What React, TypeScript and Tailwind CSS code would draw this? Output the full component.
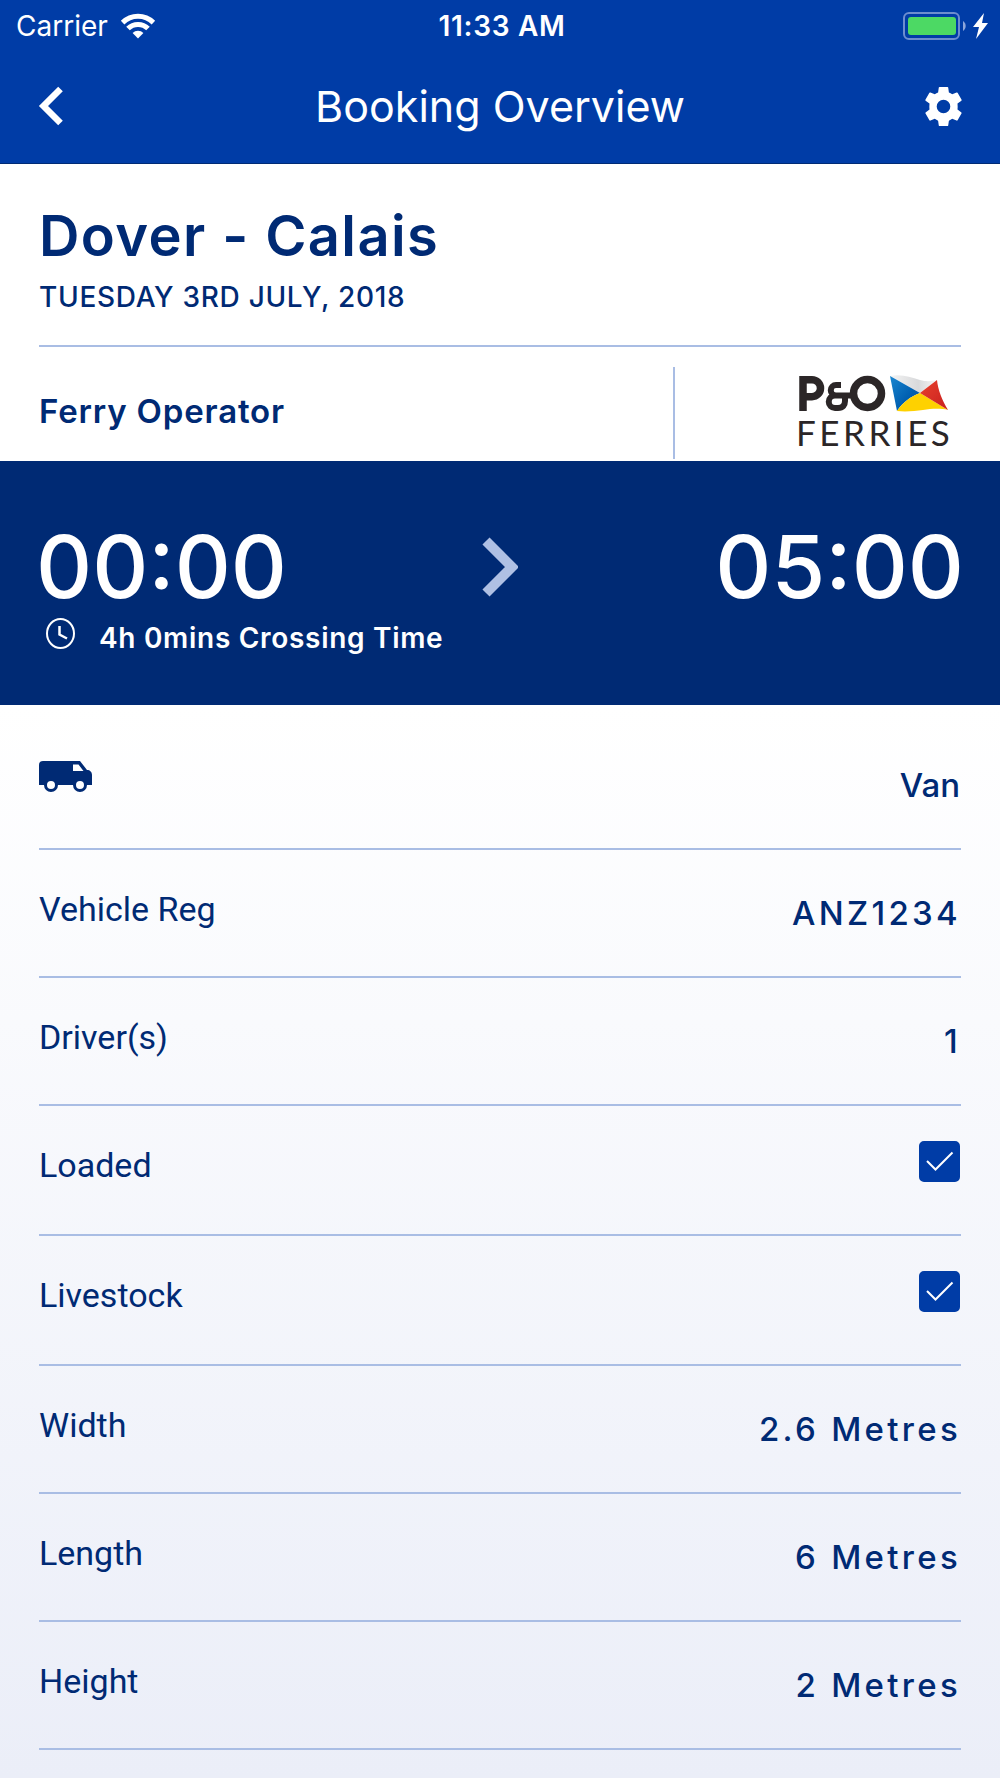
import React from "react";

const rows = [
  { label: "Vehicle Reg", value: "ANZ1234" },
  { label: "Driver(s)", value: "1" },
  { label: "Loaded", checked: true },
  { label: "Livestock", checked: true },
  { label: "Width", value: "2.6 Metres" },
  { label: "Length", value: "6 Metres" },
  { label: "Height", value: "2 Metres" },
];

const StatusBar = () => (
  <div className="grid grid-cols-3 items-center h-[51px] pl-4 pr-3 text-[28px] leading-8">
    <div className="flex items-center gap-3">
      <span>Carrier</span>
      <svg width="36" height="26" viewBox="0 0 36 26" aria-hidden="true">
        <g fill="none" stroke="white" strokeWidth="5">
          <path d="M2.6 9.6a22 22 0 0 1 30.8 0" />
          <path d="M8 15.6a14 14 0 0 1 20 0" />
        </g>
        <path fill="white" d="M12.6 20a7.6 7.6 0 0 1 10.8 0L18 25.6z" />
      </svg>
    </div>
    <span className="text-center font-semibold tracking-wide">11:33 AM</span>
    <div className="flex justify-end">
      <svg width="85" height="28" viewBox="0 0 85 28" aria-hidden="true">
        <rect x="1" y="1" width="55" height="26" rx="5" fill="none" stroke="#6c8dcf" strokeWidth="2" />
        <rect x="5" y="5" width="48" height="18" rx="3" fill="#4cd964" />
        <path d="M60 9a6 6 0 0 1 0 10z" fill="#8ca6db" />
        <path d="M81 1L70 15h6l-3 12L85 11h-6z" fill="white" />
      </svg>
    </div>
  </div>
);

const FerryLogo = () => (
  <svg
    role="img"
    aria-label="P&O Ferries"
    width="161"
    height="78"
    viewBox="-3 0 161 78"
    fill="none"
    stroke="#2b2627"
  >
    <defs>
      <linearGradient id="flagBlue" x1="0" y1="0" x2="1" y2="1">
        <stop offset="0" stopColor="#1a86d0" />
        <stop offset="0.6" stopColor="#005fb0" />
        <stop offset="1" stopColor="#0a4f9b" />
      </linearGradient>
      <linearGradient id="flagRed" x1="0" y1="0" x2="1" y2="1">
        <stop offset="0" stopColor="#e8402c" />
        <stop offset="1" stopColor="#c8201f" />
      </linearGradient>
      <linearGradient id="flagWhite" x1="0" y1="0" x2="1" y2="0">
        <stop offset="0" stopColor="#f4f4f4" />
        <stop offset="0.6" stopColor="#d8d9db" />
        <stop offset="1" stopColor="#f6f6f6" />
      </linearGradient>
    </defs>
    <g strokeWidth="7.500">
      <path d="M4 36V4.700h9a8.500 8.500 0 0 1 0 17H4" />
      <circle cx="68.500" cy="18.500" r="14" />
    </g>
    <path
      strokeWidth="6"
      d="M42 10h-5a5 5 0 0 0 0 10.500h-1a6 6 0 0 0 0 12.500h3c5 0 7-3 7-7v-7M36 20.500H54"
    />
    <g stroke="none">
      <path fill="url(#flagWhite)" d="M91 1c12-2 20 1 30 4 7 2 12 1 17 0L121 18z" />
      <path fill="url(#flagBlue)" d="M91 1l30 17c-10 4-17 9-23 18z" />
      <path fill="#fed100" d="M98 36c6-9 13-14 23-18l28 17c-9-2-17-1-25 0s-17 2-26 1z" />
      <path fill="url(#flagRed)" d="M138 5c1 10 5 20 11 30L121 18z" />
    </g>
    <text
      x="-3"
      y="71"
      fill="#2b2627"
      stroke="none"
      className="font-['Lato',sans-serif] text-[35px] tracking-widest"
    >
      FERRIES
    </text>
  </svg>
);

const VanIcon = () => (
  <svg role="img" aria-label="Vehicle" width="53" height="32" viewBox="0 0 53 32">
    <path
      fill="#002a74"
      fillRule="evenodd"
      d="M4 0h37l7 9c3 0 5 2 5 5v10h-5a7 7 0 0 1-14 0H19a7 7 0 0 1-14 0H0V4a4 4 0 0 1 4-4zM34 3.500V10h10.500l-5-6.500zM12 20a4 4 0 1 0 0 8 4 4 0 0 0 0-8zM41 20a4 4 0 1 0 0 8 4 4 0 0 0 0-8z"
    />
  </svg>
);

const GearIcon = () => (
  <svg width="37" height="39" viewBox="0 0 37 39" aria-hidden="true">
    <path
      fill="white"
      fillRule="evenodd"
      d="M14.500 0h8q.6 0 .7.600l.7 4.800q1.700.7 3.300 1.900l4.400-1.800q.6-.2 1 .3l4 7q.2.500-.2.900L32.500 16.500q.3 3 0 6l3.900 2.900q.4.300.2.900l-4 7q-.4.500-1 .3l-4.400-1.800q-1.600 1.200-3.300 1.900l-.7 4.700q-.1.600-.7.600h-8q-.6 0-.7-.6l-.7-4.700q-1.700-.7-3.300-1.900l-4.400 1.800q-.6.200-1-.3l-4-7q-.2-.6.200-.9l3.900-2.900q-.3-3 0-6L.600 13.700q-.4-.4-.2-.9l4-7q.4-.5 1-.3l4.400 1.800q1.600-1.200 3.300-1.900l.7-4.800q.1-.6.7-.6zM18.500 12.700a6.800 6.800 0 1 0 0 13.600 6.800 6.800 0 0 0 0-13.600z"
    />
  </svg>
);

const App = () => {
  return (
    <div className="min-h-screen flex flex-col bg-white text-[#002a74] font-['Inter',sans-serif]">
      <header className="bg-[#003ca6] text-white border-b border-[#002a74]">
        <StatusBar />
        <div className="flex items-center justify-between px-[38px] pb-0.5 h-28">
          <button aria-label="Back" className="w-10">
            <svg width="26" height="40" viewBox="0 0 26 40">
              <path d="M22.500 3L5.500 20l17 17" fill="none" stroke="white" strokeWidth="6.500" />
            </svg>
          </button>
          <h1 className="text-[43px] leading-[52px]">Booking Overview</h1>
          <button aria-label="Settings" className="w-10 flex justify-end">
            <GearIcon />
          </button>
        </div>
      </header>

      <section className="px-[39px]">
        <div className="pt-9 pb-7 border-b-2 border-[#a9bde4]">
          <h2 className="text-[56px] leading-[72px] font-semibold tracking-wide">Dover - Calais</h2>
          <p className="pt-[5px] text-[28px] leading-10 font-medium uppercase tracking-wide">
            Tuesday 3rd July, 2018
          </p>
        </div>
        <div className="flex items-stretch pt-5 pb-0.5">
          <p className="flex-1 pt-6 text-[33px] leading-10 font-semibold tracking-wide">Ferry Operator</p>
          <div className="w-[288px] h-[92px] border-l-2 border-[#a9bde4] flex justify-end pt-2 pr-1">
            <FerryLogo />
          </div>
        </div>
      </section>

      <section className="bg-[#002a74] text-white px-9 pt-[61px] h-[244px]">
        <div className="flex items-center justify-between text-[87px] leading-[90px] font-medium">
          <time className="flex-1">00:00</time>
          <svg width="36" height="60" viewBox="0 0 36 60" aria-hidden="true">
            <path d="M4 4l26 26L4 56" fill="none" stroke="#afc0e4" strokeWidth="10" />
          </svg>
          <time className="flex-1 text-right">05:00</time>
        </div>
        <div className="flex items-start gap-6 px-2.5 pt-1.5 text-[28px] leading-10 font-semibold">
          <svg width="29" height="31" viewBox="0 0 29 31" fill="none" stroke="white" aria-hidden="true">
            <ellipse cx="14.500" cy="15.500" rx="13.500" ry="14.500" strokeWidth="2" />
            <path d="M13.500 8v8.500l7.500 4" strokeWidth="2.500" />
          </svg>
          <p className="tracking-wide">4h 0mins Crossing Time</p>
        </div>
      </section>

      <main className="flex-1 px-[39px] bg-linear-to-b from-white to-[#ebeef8]">
        <div className="flex items-start justify-between pt-14 h-[145px] border-b-2 border-[#a9bde4]">
          <VanIcon />
          <span className="pt-1 pr-px text-[33px] leading-10 font-medium">Van</span>
        </div>
        {rows.map((row) => (
          <label
            key={row.label}
            className={`flex items-start justify-between pt-[35px] border-b-2 border-[#a9bde4] ${row.checked ? "h-[130px]" : "h-32"}`}
          >
            <span className="pt-1 font-['Roboto',sans-serif] text-[34px] leading-10">{row.label}</span>
            {row.checked ? (
              <span className="grid pr-px">
                <input
                  type="checkbox"
                  defaultChecked
                  className="peer col-start-1 row-start-1 appearance-none size-[41px] rounded-[5px] border-2 border-[#003ca6] checked:bg-[#003ca6]"
                />
                <svg
                  viewBox="0 0 41 41"
                  className="col-start-1 row-start-1 size-[41px] pointer-events-none hidden peer-checked:block"
                >
                  <path d="M8 20l8.500 8.500L33.500 11.500" fill="none" stroke="white" strokeWidth="2" />
                </svg>
              </span>
            ) : (
              <span className="pt-2 text-[33px] leading-10 font-medium tracking-widest">{row.value}</span>
            )}
          </label>
        ))}
      </main>
    </div>
  );
};

export default App;
